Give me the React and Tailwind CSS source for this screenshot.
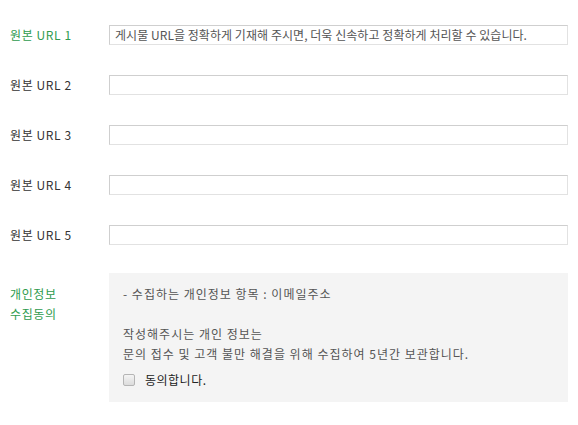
import React from "react";

const font = { fontFamily: '"Noto Sans CJK KR", "Noto Sans", sans-serif' };

function UrlRow({ n, green, placeholder }) {
  return (
    <div className="flex items-center h-[20px] mb-[30px]">
      <div className={`w-[99px] shrink-0 text-[12px] leading-[20px] tracking-[0.6px] ${green ? "text-[#2e9b4e]" : "text-[#333]"}`}>
        원본 URL {n}
      </div>
      <div className="flex-1 h-[20px] mr-[10px] border border-[#e2e2e2] border-t-[#cfcfcf] border-l-[#cfcfcf] bg-white flex items-center px-[5px]">
        {placeholder && (
          <span className="text-[12px] text-[#555] tracking-[0.05px] whitespace-nowrap leading-[18px]">{placeholder}</span>
        )}
      </div>
    </div>
  );
}

export default function App() {
  return (
    <div className="w-[578px] h-[425px] bg-white pl-[10px] pt-[25px]" style={font}>
      <UrlRow n={1} green placeholder="게시물 URL을 정확하게 기재해 주시면, 더욱 신속하고 정확하게 처리할 수 있습니다." />
      <UrlRow n={2} />
      <UrlRow n={3} />
      <UrlRow n={4} />
      <UrlRow n={5} />
      <div className="flex -mt-[2px]">
        <div className="w-[99px] shrink-0 pt-[11px] text-[12px] leading-[20px] tracking-[0.6px] text-[#2e9b4e]">
          <div>개인정보</div>
          <div>수집동의</div>
        </div>
        <div className="flex-1 mr-[10px] bg-[#f4f4f4] pl-[14px] pt-[11px] pb-[12px] text-[12px] leading-[20px] tracking-[1px] text-[#555] whitespace-nowrap">
          <div>- 수집하는 개인정보 항목 : 이메일주소</div>
          <div className="h-[20px]"></div>
          <div>작성해주시는 개인 정보는</div>
          <div>문의 접수 및 고객 불만 해결을 위해 수집하여 5년간 보관합니다.</div>
          <div className="flex items-center h-[20px] mt-[6px]">
            <span className="w-[12px] h-[12px] border border-[#b5b5b5] rounded-[2px] bg-gradient-to-b from-[#f4f4f4] to-[#dcdcdc] mr-[10px]"></span>
            <span className="text-[#222] tracking-[0.5px]">동의합니다.</span>
          </div>
        </div>
      </div>
    </div>
  );
}
